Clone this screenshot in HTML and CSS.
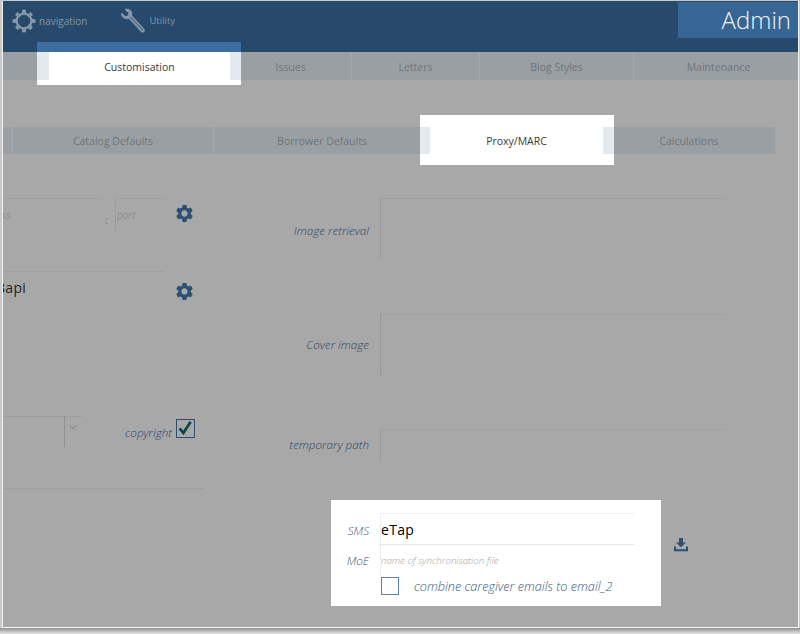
FILE: index.html
```html
<!DOCTYPE html>
<html lang="en">
<head>
<meta charset="utf-8">
<title>Admin</title>
<link rel="stylesheet" href="styles.css">
</head>
<body>
<div class="window">
  <header class="topbar">
    <nav class="topnav">
      <a class="topnav-item nav-first">
        <svg class="nav-gear" viewBox="0 0 24 24"><g fill="#8496a8"><rect x="10" y="0.5" width="4" height="5" rx="1"/><rect x="10" y="18.5" width="4" height="5" rx="1"/><rect x="0.5" y="10" width="5" height="4" rx="1"/><rect x="18.5" y="10" width="5" height="4" rx="1"/><rect x="10" y="1" width="4" height="5" rx="1" transform="rotate(45 12 12)"/><rect x="10" y="18" width="4" height="5" rx="1" transform="rotate(45 12 12)"/><rect x="10" y="1" width="4" height="5" rx="1" transform="rotate(-45 12 12)"/><rect x="10" y="18" width="4" height="5" rx="1" transform="rotate(-45 12 12)"/></g><circle cx="12" cy="12" r="7.4" fill="none" stroke="#8496a8" stroke-width="2.4"/></svg>
        <span>navigation</span>
      </a>
      <a class="topnav-item nav-second">
        <svg class="nav-wrench" viewBox="0 0 26 26"><path d="M1.500 5 5.500 8.600 8.200 7.800 8.900 5 5 1.500C8 .4 11 1.800 11.800 4.600c.3 1 .2 2-.1 2.900L24 21c.8.900.8 2-.1 2.800-.8.700-1.900.7-2.700-.1L9 10.400c-1 .5-2.200.6-3.400.3C2.800 9.900 1.100 7.800 1.500 5z" fill="#8496a8" stroke="#9fb0bf" stroke-width=".5"/><path d="M10.500 9 23 22.500" stroke="#3f5d7b" stroke-width="1.100"/></svg>
        <span class="utility">Utility</span>
      </a>
    </nav>
    <div class="brand">Admin</div>
  </header>

  <div class="tabs main-tabs">
    <div class="tab w-46"></div>
    <div class="tab active main-active w-181"><span>Customisation</span></div>
    <div class="tab w-121"><span>Issues</span></div>
    <div class="tab w-128"><span>Letters</span></div>
    <div class="tab w-154"><span>Blog Styles</span></div>
    <div class="tab w-164 tab-last"><span>Maintenance</span></div>
  </div>

  <div class="tabs sub-tabs">
    <div class="tab w-9"></div>
    <div class="tab w-201"><span>Catalog Defaults</span></div>
    <div class="tab w-217"><span>Borrower Defaults</span></div>
    <div class="tab active sub-active w-173"><span>Proxy/MARC</span></div>
    <div class="tab w-172"><span>Calculations</span></div>
  </div>

  <main class="form">
    <section class="col-left">
      <div class="row row-proxy">
        <div class="field address"><span class="placeholder clip">address</span></div>
        <span class="colon">:</span>
        <div class="field port"><span class="placeholder">port</span></div>
        <svg class="gear" viewBox="0 0 24 24"><path d="M19.14 12.94c.04-.3.06-.61.06-.94 0-.32-.02-.64-.07-.94l2.03-1.58c.18-.14.23-.41.12-.61l-1.92-3.32c-.12-.22-.37-.29-.59-.22l-2.39.96c-.5-.38-1.03-.7-1.62-.94l-.36-2.54c-.04-.24-.24-.41-.48-.41h-3.84c-.24 0-.43.17-.47.41l-.36 2.54c-.59.24-1.13.57-1.62.94l-2.39-.96c-.22-.08-.47 0-.59.22L2.74 8.87c-.12.21-.08.47.12.61l2.03 1.58c-.05.3-.09.63-.09.94s.02.64.07.94l-2.03 1.58c-.18.14-.23.41-.12.61l1.92 3.32c.12.22.37.29.59.22l2.39-.96c.5.38 1.03.7 1.62.94l.36 2.54c.05.24.24.41.48.41h3.84c.24 0 .44-.17.47-.41l.36-2.54c.59-.24 1.13-.56 1.62-.94l2.39.96c.22.08.47 0 .59-.22l1.92-3.32c.12-.22.07-.47-.12-.61l-2.01-1.58zM12 15.6c-1.98 0-3.6-1.62-3.6-3.6s1.62-3.6 3.6-3.6 3.6 1.62 3.6 3.6-1.62 3.6-3.6 3.6z"/></svg>
      </div>
      <div class="row row-api">
        <div class="api-field"><span class="value api-value">Bapi</span></div>
        <svg class="gear" viewBox="0 0 24 24"><path d="M19.14 12.94c.04-.3.06-.61.06-.94 0-.32-.02-.64-.07-.94l2.03-1.58c.18-.14.23-.41.12-.61l-1.92-3.32c-.12-.22-.37-.29-.59-.22l-2.39.96c-.5-.38-1.03-.7-1.62-.94l-.36-2.54c-.04-.24-.24-.41-.48-.41h-3.84c-.24 0-.43.17-.47.41l-.36 2.54c-.59.24-1.13.57-1.62.94l-2.39-.96c-.22-.08-.47 0-.59.22L2.74 8.87c-.12.21-.08.47.12.61l2.03 1.58c-.05.3-.09.63-.09.94s.02.64.07.94l-2.03 1.58c-.18.14-.23.41-.12.61l1.92 3.32c.12.22.37.29.59.22l2.39-.96c.5.38 1.03.7 1.62.94l.36 2.54c.05.24.24.41.48.41h3.84c.24 0 .44-.17.47-.41l.36-2.54c.59-.24 1.13-.56 1.62-.94l2.39.96c.22.08.47 0 .59-.22l1.92-3.32c.12-.22.07-.47-.12-.61l-2.01-1.58zM12 15.6c-1.98 0-3.6-1.62-3.6-3.6s1.62-3.6 3.6-3.6 3.6 1.62 3.6 3.6-1.62 3.6-3.6 3.6z"/></svg>
      </div>
      <div class="row row-select">
        <div class="select-box"></div>
        <div class="select-arrow"><svg viewBox="0 0 10 6"><path d="M1.500 1.500 5 4.500 8.500 1.500" fill="none" stroke="#8a8a8a" stroke-width="1.200"/></svg></div>
        <span class="label copyright">copyright</span>
        <span class="check-box checked"><svg viewBox="0 0 16 16"><path d="M2.600 8.400 6.400 13 13.600 1.800" fill="none" stroke="#0c4747" stroke-width="2.800"/></svg></span>
      </div>
      <div class="rule"></div>
    </section>

    <section class="col-right">
      <div class="frow frow-image">
        <span class="label">Image retrieval</span>
        <div class="box"></div>
      </div>
      <div class="frow frow-cover">
        <span class="label">Cover image</span>
        <div class="box"></div>
      </div>
      <div class="frow frow-temp">
        <span class="label">temporary path</span>
        <div class="box"></div>
      </div>
      <div class="panel-row">
        <div class="panel">
          <span class="label panel-label sms-label">SMS</span>
          <div class="panel-field sms-field"><span class="value">eTap</span></div>
          <span class="label panel-label moe-label">MoE</span>
          <div class="panel-field moe-field"><span class="placeholder">name of synchronisation file</span></div>
          <span></span>
          <div class="combine"><span class="check-box"></span><span class="label combine-text">combine caregiver emails to email_2</span></div>
        </div>
        <svg class="download" viewBox="0 0 14 14"><path d="M5 0h4v4.500h3L7 9.200 2 4.500h3z" fill="#2c4f74"/><path d="M1 8.500v3.700h12V8.500" fill="none" stroke="#2c4f74" stroke-width="2"/></svg>
      </div>
    </section>
  </main>
</div>
</body>
</html>
```
FILE: styles.css
```css
* { box-sizing: border-box; }
html, body { margin: 0; height: 634px; overflow: hidden; }
body {
  padding: 1px 1px 0 2px;
  background: linear-gradient(#c9c9c9 0, #c9c9c9 628px, #8f8f8f 628px, #e6e6e6 634px);
  font-family: "Open Sans", sans-serif;
}
.window {
  height: 627px;
  background: #a8a8a8;
  border-left: 1px solid #f2f2f2;
  border-right: 1px solid #f2f2f2;
  border-bottom: 1px solid #f6f6f6;
  overflow: hidden;
}

/* top bar */
.topbar {
  height: 51px;
  background: #27496b;
  display: flex;
  justify-content: space-between;
  align-items: flex-start;
}
.topnav { display: flex; padding: 7px 0 0 9px; }
.topnav-item { display: flex; align-items: center; font-size: 10px; color: #8496a8; height: 25px; }
.utility { font-size: 9.500px; }
.nav-gear { width: 24px; height: 24px; margin-right: 3px; }
.nav-wrench { width: 26px; height: 26px; margin-right: 3px; }
.nav-second { margin-left: 33px; }
.brand {
  width: 120px;
  height: 36px;
  margin-top: 1px;
  padding-right: 7px;
  background: #376694;
  color: #f2f5f8;
  font-size: 24px;
  font-weight: 300;
  line-height: 36px;
  text-align: right;
}

/* tabs */
.tabs { display: flex; background: #9a9fa4; }
.main-tabs { height: 28px; }
.main-tabs .tab { padding-top: 1px; }
.main-tabs .tab-last { padding-left: 6px; }
.sub-tabs { height: 27px; margin-top: 47px; width: 772px; }
.tab {
  position: relative;
  display: flex;
  align-items: center;
  justify-content: center;
  flex: none;
  font-size: 10.500px;
  color: #6f747a;
  border-left: 1px solid #a5a9ae;
}
.tab:first-child { border-left: 0; }
.tab span { position: relative; z-index: 2; }
.tab.active { color: #3a3a3a; border-left: 0; }
.tab.active::before { content: ""; position: absolute; z-index: 1; }
.main-active::before {
  left: -12px; right: -11px; top: -10px; bottom: -5px;
  background:
    linear-gradient(#3b6ea3, #3b6ea3) 0 0 / 100% 10px no-repeat,
    linear-gradient(#fff, #fff) 12px 0 / 181px 100% no-repeat,
    linear-gradient(#e4e9f0, #e4e9f0) 0 10px / 100% 28px no-repeat,
    #fff;
}
.sub-active::before {
  left: -10px; right: -11px; top: -12px; bottom: -11px;
  background:
    linear-gradient(#fff, #fff) 10px 0 / 173px 100% no-repeat,
    linear-gradient(#e4e9f0, #e4e9f0) 0 12px / 100% 27px no-repeat,
    #fff;
}
.tab.active + .tab { border-left: 0; }
.w-9 { width: 9px; } .w-46 { width: 46px; } .w-121 { width: 121px; } .w-128 { width: 128px; }
.w-154 { width: 154px; } .w-164 { width: 164px; } .w-172 { width: 172px; } .w-173 { width: 173px; }
.w-181 { width: 181px; } .w-201 { width: 201px; } .w-217 { width: 217px; }

/* form */
.form { display: flex; margin-top: 44px; }
.col-left { width: 202px; flex: none; }
.col-right { flex: 1; }
.row { display: flex; }
.label { font-size: 11.700px; font-style: italic; font-weight: 300; color: #2b4565; }
.placeholder { font-size: 10px; font-style: italic; font-weight: 300; color: #808080; }
.value { font-size: 14px; color: #111; letter-spacing: .3px; line-height: 20px; }
.gear { width: 21px; height: 21px; fill: #2c4f74; flex: none; }

.row-proxy { height: 34px; }
.address { width: 97px; border-top: 1px solid #a0a0a0; overflow: hidden; }
.clip { display: block; margin: 9px 0 0 -27px; }
.colon { width: 15px; padding: 13px 0 0 5px; font-size: 11px; color: #777; line-height: 18px; }
.port { width: 50px; border-top: 1px solid #a0a0a0; border-left: 1px solid #9c9c9c; padding: 3px 0 0 1px; }
.row-proxy .gear { margin: 5px 0 0 9px; }

.row-api { margin-top: 39px; height: 145px; }
.api-field { width: 162px; height: 30px; border-top: 1px solid #9f9f9f; overflow: hidden; }
.api-value { display: block; margin: 6px 0 0 -7px; color: #222; }
.row-api .gear { margin: 10px 0 0 9px; }

.row-select { height: 72px; }
.select-box { width: 62px; height: 31px; border-top: 1px solid #9c9c9c; border-right: 1px solid #909090; }
.select-arrow { width: 17px; height: 31px; border-top: 1px solid #9c9c9c; padding: 7px 0 0 3px; }
.select-arrow svg { display: block; width: 10px; height: 6px; }
.copyright { width: 51px; margin: 8px 0 0 43px; line-height: 17px; white-space: nowrap; }
.check-box { display: block; flex: none; width: 19px; height: 19px; border: 1.500px solid #3e6595; }
.checked { margin-top: 3px; border-color: #2f4d70; }
.checked svg { display: block; width: 16px; height: 16px; }
.rule { width: 202px; border-top: 1px solid #9e9e9e; }

.frow { display: grid; grid-template-columns: 164px 345px; column-gap: 11px; align-items: center; }
.frow .label { text-align: right; margin-top: -2px; }
.frow-image .label { margin-top: 3px; }
.box { height: 100%; border-top: 1px solid #a0a0a0; border-left: 1px solid #969696; }
.frow-image { height: 60px; }
.frow-cover { height: 61px; margin-top: 56px; }
.frow-temp { height: 31px; margin-top: 54px; }

.panel-row { display: flex; align-items: flex-start; margin: 40px 0 0 126px; }
.panel {
  width: 330px;
  height: 106px;
  padding: 13px 27px 0 0;
  background: #fff;
  display: grid;
  grid-template-columns: 38px 254px;
  grid-template-rows: 32px 31px 20px;
  column-gap: 11px;
}
.panel-label { align-self: center; text-align: right; color: #36587f; }
.sms-label { padding-top: 1px; }
.moe-label { margin-top: -2px; }
.panel-field { border-left: 1px solid #eee; display: flex; align-items: center; }
.sms-field { border-top: 1px solid #eee; border-bottom: 1px solid #e6e6e6; }
.sms-field .value { color: #000; padding-top: 2px; }
.moe-field .placeholder { color: #a3a3a3; font-size: 9.700px; }
.combine { display: flex; align-items: center; padding-left: 1px; }
.combine .check-box { width: 18px; height: 18px; border-color: #5d7fa8; }
.combine-text { margin-left: 15px; font-size: 12.700px; color: #36587f; white-space: nowrap; }
.download { width: 14px; height: 14px; margin: 38px 0 0 13px; }
```
